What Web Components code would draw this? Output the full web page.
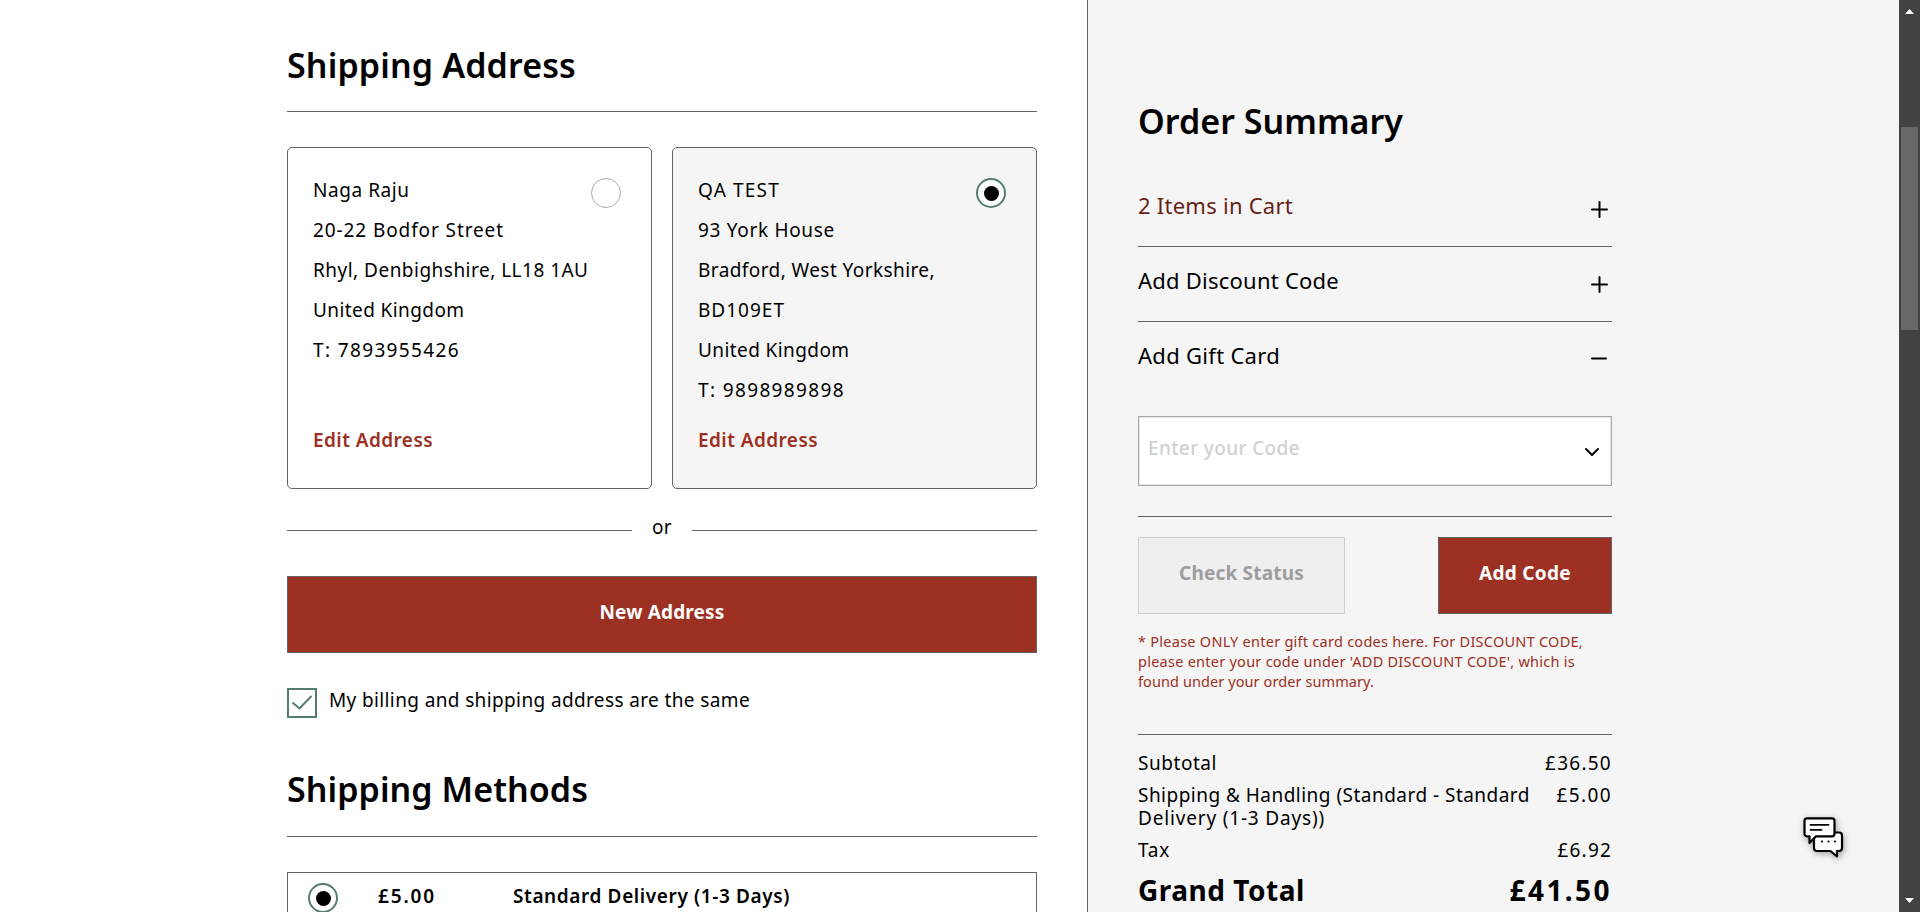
<!DOCTYPE html>
<html lang="en"><head><meta charset="utf-8"><title>Checkout</title>
<style>
html,body{margin:0;height:100%;overflow:hidden;background:#fff}
body{font-family:"Noto Sans","Open Sans",sans-serif;font-size:19px;color:#000}
</style></head><body>
<checkout-page></checkout-page>
<script>
const define = (name, css, html, init) => customElements.define(name, class extends HTMLElement {
  connectedCallback() {
    if (this.shadowRoot) return;
    const root = this.attachShadow({mode: 'open'});
    root.innerHTML = `<style>*{box-sizing:border-box}${css}</style>${typeof html === 'function' ? html(this) : html}`;
    if (init) init(this, root);
  }
});

/* One line of text tracked to a given advance width. */
define('tracked-text', ':host{display:inline-block;white-space:nowrap}span{display:inline-block}',
  '<span><slot></slot></span>', (el, root) => {
    const span = root.querySelector('span'), target = +el.getAttribute('w');
    const natural = span.getBoundingClientRect().width;
    if (natural) span.style.letterSpacing = ((target - natural) / el.textContent.length).toFixed(3) + 'px';
  });

define('section-heading', `:host{display:block;font-size:34px;font-weight:600;line-height:48px}
:host([ruled]){border-bottom:1px solid #636363;padding-bottom:var(--gap,22px)}h2{margin:0;font:inherit;height:48px}`,
  '<h2><slot></slot></h2>');

define('radio-dot', `:host{display:block;width:30px;height:30px;border:1px solid #aaa;border-radius:50%;background:#fff;flex:none;box-sizing:border-box}
:host([checked]){border:2px solid #537d6e;display:grid;place-items:center}
i{display:none}:host([checked]) i{display:block;width:15px;height:15px;border-radius:50%;background:#000}`, '<i></i>');

define('address-card', `:host{display:flex;flex-direction:column;justify-content:space-between;width:365px;height:342px;border:1px solid #636363;border-radius:5px;padding:22px 30px 28px 25px;box-sizing:border-box;line-height:40px}
:host([selected]){background:#f5f5f5}
.top{display:flex;justify-content:space-between}.lines{display:flex;flex-direction:column;align-items:flex-start}
radio-dot{margin-top:8px}
a{color:#9c3022;font-weight:600;height:40px;text-decoration:underline;text-decoration-thickness:2px;text-underline-offset:2px}`,
  el => `<div class="top"><div class="lines"><slot></slot></div><radio-dot ${el.hasAttribute('selected') ? 'checked' : ''}></radio-dot></div>
<a><tracked-text w="120" style="text-decoration:inherit">Edit Address</tracked-text></a>`);

define('or-divider', `:host{display:flex;align-items:center;justify-content:space-between;height:40px;line-height:40px;margin-top:18px}
i{width:345px;height:1px;background:#636363;margin-top:7px}`, '<i></i><tracked-text w="20">or</tracked-text><i></i>');

define('action-button', `:host{display:block;height:77px}button{display:block;width:100%;height:77px;margin:0;padding:0 0 4px;border:1px solid #636363;border-radius:0;background:#9c3022;color:#fff;font:inherit;font-weight:700;line-height:71px;text-align:center}
:host([disabled]) button{background:#efefef;border-color:#cfcfcf;color:#9d9d9d}`, '<button><slot></slot></button>');

define('check-box', `:host{display:flex;gap:12px;height:30px;line-height:24px}svg{flex:none}`,
  `<svg width="30" height="30"><rect x="1" y="1" width="28" height="28" fill="#fff" stroke="#537d6e" stroke-width="2"/><path d="M5.5 14.5l7 6L24.5 8" fill="none" stroke="#537d6e" stroke-width="2"/></svg><slot></slot>`);

define('shipping-method', `:host{display:flex;height:80px;margin-top:35px;border:1px solid #636363;padding:10px 20px;box-sizing:border-box;font-weight:600;line-height:26px}
.price{margin-left:40px;width:135px;padding-top:-1px}`,
  `<radio-dot checked></radio-dot><span class="price"><slot name="price"></slot></span><slot></slot>`);

define('summary-row', `:host{display:flex;justify-content:space-between;height:75px;border-bottom:1px solid #636363;box-sizing:border-box;font-size:22px;line-height:67px;padding-right:4px}
:host([open]){border-color:transparent}svg{margin-top:28px}`,
  el => `<slot></slot><svg width="18" height="19" stroke="#000" stroke-width="2" stroke-linecap="round">${el.hasAttribute('open') ? '<path d="M2 8.5h14"/>' : '<path d="M2 9.5h15M9.5 2v15"/>'}</svg>`);

define('code-field', `:host{display:flex;justify-content:space-between;height:70px;margin-top:19px;background:#fff;border:1px solid #a5a6a6;box-shadow:inset 0 0 0 1px #e7e7e8;padding:0 11px 0 9px;box-sizing:border-box;color:#d1d1d1;line-height:62px;font-weight:500}
svg{margin-top:30px}`, `<slot></slot><svg width="16" height="10" fill="none" stroke="#000" stroke-width="2" stroke-linecap="round" stroke-linejoin="round"><path d="M2 2l6 6 6-6"/></svg>`);

define('total-row', `:host{display:flex;justify-content:space-between;line-height:23px;margin-top:9px}
:host([grand]){font-size:28px;font-weight:700;line-height:38px}.l{display:flex;flex-direction:column;align-items:flex-start}`,
  '<div class="l"><slot></slot></div><slot name="amount"></slot>');

define('order-summary', `:host{display:block;width:474px}
.rows{margin-top:27px}hr{height:1px;border:0;margin:0;background:#636363}
.buttons{display:flex;justify-content:space-between;margin-top:20px}
.note{color:#9c3022;font-size:14.5px;line-height:20px;margin-top:17px;margin-bottom:43px;display:flex;flex-direction:column;align-items:flex-start}
.red{color:#651f17}total-row:first-of-type{margin-top:17px}`,
`<section-heading><tracked-text w="265">Order Summary</tracked-text></section-heading>
<div class="rows">
<summary-row><tracked-text class="red" w="155">2 Items in Cart</tracked-text></summary-row>
<summary-row><tracked-text w="201">Add Discount Code</tracked-text></summary-row>
<summary-row open><tracked-text w="142">Add Gift Card</tracked-text></summary-row></div>
<code-field><tracked-text w="152">Enter your Code</tracked-text></code-field>
<hr style="margin-top:30px">
<div class="buttons"><action-button disabled style="width:207px"><tracked-text w="125">Check Status</tracked-text></action-button>
<action-button style="width:174px"><tracked-text w="92">Add Code</tracked-text></action-button></div>
<div class="note"><tracked-text w="445">* Please ONLY enter gift card codes here. For DISCOUNT CODE,</tracked-text>
<tracked-text w="437">please enter your code under 'ADD DISCOUNT CODE', which is</tracked-text>
<tracked-text w="236">found under your order summary.</tracked-text></div>
<hr>
<total-row><tracked-text w="79">Subtotal</tracked-text><tracked-text slot="amount" w="67">£36.50</tracked-text></total-row>
<total-row><tracked-text w="392">Shipping &amp; Handling (Standard - Standard</tracked-text><tracked-text w="187">Delivery (1-3 Days))</tracked-text><tracked-text slot="amount" w="55.5">£5.00</tracked-text></total-row>
<total-row><tracked-text w="32">Tax</tracked-text><tracked-text slot="amount" w="54.5">£6.92</tracked-text></total-row>
<total-row grand><tracked-text w="167">Grand Total</tracked-text><tracked-text slot="amount" w="102.5">£41.50</tracked-text></total-row>`);

define('chat-launcher', `:host{display:block;width:50px;height:50px}svg{filter:drop-shadow(1px 2px 3px rgba(0,0,0,.35))}`,
`<svg width="50" height="50" fill="#fff" stroke="#000" stroke-width="2.2" stroke-linejoin="round">
<path d="M17.500 16.500H40a3 3 0 0 1 3 3v12.500a3 3 0 0 1-3 3h-2v5.500L31.500 35H18a3 3 0 0 1-3-3V19a3 3 0 0 1 2.500-2.500z"/>
<path d="M8 2.300h25a2.500 2.500 0 0 1 2.500 2.500v13a2.500 2.500 0 0 1-2.500 2.500H17L10.500 27v-6.700H8a2.500 2.500 0 0 1-2.500-2.500v-13A2.500 2.500 0 0 1 8 2.300z"/>
<path d="M11.500 8.800h18M11.500 13.800h11" stroke-linecap="round" stroke-width="1.800"/>
<g fill="#000" stroke="none"><circle cx="23" cy="25.500" r="1.100"/><circle cx="29.500" cy="25.500" r="1.100"/><circle cx="36" cy="25.500" r="1.100"/></g></svg>`);

define('page-scrollbar', `:host{display:flex;flex-direction:column;align-items:center;justify-content:space-between;width:21px;background:#424242;padding:9px 0;box-sizing:border-box}
.thumb{width:17px;height:203px;background:#686868;margin-top:113px;margin-bottom:auto}svg{display:block}`,
`<svg width="9" height="5"><path d="M0 5L4.500 0 9 5z" fill="#fff"/></svg><div class="thumb"></div><svg width="9" height="5"><path d="M0 0h9L4.500 5z" fill="#fff"/></svg>`);

define('checkout-page', `:host{display:flex;height:912px;overflow:hidden;position:relative}
main{width:1087px;flex:none;padding:41px 50px 0 287px}
aside{flex:1;background:#f5f5f5;border-left:1px solid #636363;padding:97px 0 0 50px}
.cards{display:flex;justify-content:space-between;margin-top:35px}
chat-launcher{position:absolute;left:1799px;top:816px}`,
`<main>
<section-heading ruled><tracked-text w="289">Shipping Address</tracked-text></section-heading>
<div class="cards">
<address-card><tracked-text w="96.500">Naga Raju</tracked-text><tracked-text w="191">20-22 Bodfor Street</tracked-text><tracked-text w="275.500">Rhyl, Denbighshire, LL18 1AU</tracked-text><tracked-text w="151.500">United Kingdom</tracked-text><tracked-text w="147">T: 7893955426</tracked-text></address-card>
<address-card selected><tracked-text w="82">QA TEST</tracked-text><tracked-text w="137">93 York House</tracked-text><tracked-text w="237">Bradford, West Yorkshire,</tracked-text><tracked-text w="87">BD109ET</tracked-text><tracked-text w="151.500">United Kingdom</tracked-text><tracked-text w="147">T: 9898989898</tracked-text></address-card>
</div>
<or-divider></or-divider>
<action-button style="margin-top:29px"><tracked-text w="125">New Address</tracked-text></action-button>
<check-box style="margin-top:35px"><tracked-text w="421">My billing and shipping address are the same</tracked-text></check-box>
<section-heading ruled style="margin-top:47px;--gap:23px"><tracked-text w="301">Shipping Methods</tracked-text></section-heading>
<shipping-method><tracked-text slot="price" w="58">£5.00</tracked-text><tracked-text w="277">Standard Delivery (1-3 Days)</tracked-text></shipping-method>
</main>
<aside><order-summary></order-summary></aside>
<page-scrollbar></page-scrollbar>
<chat-launcher></chat-launcher>`);
</script>
</body></html>
